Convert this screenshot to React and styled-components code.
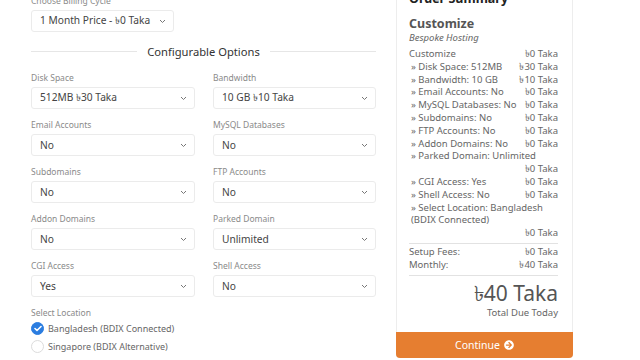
import React from "react";
import styled, { createGlobalStyle } from "styled-components";
import { FaArrowCircleRight } from "react-icons/fa";

const GlobalStyle = createGlobalStyle`
  html, body { margin: 0; padding: 0; background: #fff; overflow: hidden; }
  body { font-family: "Noto Sans", "DejaVu Sans", sans-serif; color: #444; }
  * { box-sizing: border-box; }
`;

const Page = styled.div`
  display: flex;
  align-items: flex-start;
  gap: 20px;
  padding-left: 31px;
  width: 640px;
  height: 360px;
  overflow: hidden;
`;

const Main = styled.div`
  width: 345px;
  margin-top: -5px;
  display: flex;
  flex-direction: column;
`;

const Field = styled.div`
  display: flex;
  flex-direction: column;
  gap: 4px;
  width: ${(p) => p.$width || "100%"};
`;

const Label = styled.div`
  font-size: 8.5px;
  line-height: 11px;
  color: #8a8a8a;
  white-space: nowrap;
`;

const SelectBox = styled.div`
  height: 22px;
  border: 1px solid #ebebeb;
  border-radius: 3px;
  background: #fff;
  display: flex;
  align-items: center;
  justify-content: space-between;
  padding: 0 7px 0 8px;
  font-size: 10.2px;
  color: #444;
  white-space: nowrap;
`;

const Divider = styled.div`
  display: flex;
  align-items: center;
  gap: 10px;
  margin: 13px 0 15px;
  height: 12px;
  &::before, &::after {
    content: "";
    flex: 1;
    height: 1px;
    background: #e6e6e6;
  }
`;

const DividerText = styled.span`
  font-size: 11.2px;
  color: #333;
  white-space: nowrap;
`;

const Grid = styled.div`
  display: grid;
  grid-template-columns: 164px 163px;
  column-gap: 18px;
  row-gap: 10px;
`;

const RadioList = styled.div`
  display: flex;
  flex-direction: column;
  gap: 5px;
  margin-top: 0;
`;

const RadioRow = styled.div`
  display: flex;
  align-items: center;
  gap: 4px;
  font-size: 9px;
  color: #666;
  height: 13px;
`;

const RadioDot = styled.span`
  width: 13px;
  height: 13px;
  border-radius: 50%;
  background: ${(p) => (p.$checked ? "#2b7de0" : "#fff")};
  border: 1px solid ${(p) => (p.$checked ? "#2b7de0" : "#dcdcdc")};
  display: flex;
  align-items: center;
  justify-content: center;
  flex-shrink: 0;
`;

const Summary = styled.div`
  width: 177px;
  margin-top: -10px;
  border: 1px solid #ededed;
  border-bottom: none;
  border-radius: 4px;
  display: flex;
  flex-direction: column;
`;

const SummaryBody = styled.div`
  padding: 0 14px 0 12px;
  display: flex;
  flex-direction: column;
`;

const SummaryTitle = styled.div`
  font-size: 12.5px;
  font-weight: 700;
  line-height: 16px;
  color: #222;
`;

const ProductName = styled.div`
  margin-top: 9px;
  font-size: 12.5px;
  font-weight: 700;
  line-height: 15px;
  color: #555;
`;

const ProductGroup = styled.div`
  font-size: 9.5px;
  font-style: italic;
  line-height: 13px;
  color: #666;
  margin-bottom: 4px;
`;

const Line = styled.div`
  display: flex;
  flex-wrap: wrap;
  justify-content: space-between;
  font-size: 9.5px;
  line-height: 12.8px;
  color: #666;
`;

const LineName = styled.span`
  padding-left: ${(p) => (p.$sub ? "2px" : "0")};
  width: ${(p) => (p.$full ? "100%" : "auto")};
  white-space: ${(p) => (p.$full ? "normal" : "nowrap")};
`;

const LinePrice = styled.span`
  margin-left: auto;
  white-space: nowrap;
`;

const Sep = styled.div`
  height: 1px;
  background: #e2e2e2;
  margin: ${(p) => p.$m || "3px 0"};
`;

const Total = styled.div`
  text-align: right;
  font-size: 21px;
  line-height: 26px;
  color: #555;
  margin-top: 4px;
`;

const TotalCaption = styled.div`
  text-align: right;
  font-size: 9.5px;
  line-height: 13px;
  color: #666;
`;

const ContinueButton = styled.button`
  margin: 13px -1px 0;
  height: 26px;
  border: none;
  border-radius: 0 0 4px 4px;
  background: #e67e30;
  color: #fff;
  font-family: inherit;
  font-size: 10.5px;
  display: flex;
  align-items: center;
  justify-content: center;
  gap: 4px;
  cursor: pointer;
`;

const Chevron = () => (
  <svg width="7" height="5" viewBox="0 0 7 5">
    <path d="M1 1l2.5 2.5L6 1" fill="none" stroke="#777" strokeWidth="1" />
  </svg>
);

const Check = () => (
  <svg width="8" height="7" viewBox="0 0 8 7">
    <path d="M1 3.5l2 2L7 1.5" fill="none" stroke="#fff" strokeWidth="1.6" strokeLinecap="round" strokeLinejoin="round" />
  </svg>
);

const Select = ({ value }) => (
  <SelectBox>
    <span>{value}</span>
    <Chevron />
  </SelectBox>
);

const options = [
  ["Disk Space", "512MB ৳30 Taka"],
  ["Bandwidth", "10 GB ৳10 Taka"],
  ["Email Accounts", "No"],
  ["MySQL Databases", "No"],
  ["Subdomains", "No"],
  ["FTP Accounts", "No"],
  ["Addon Domains", "No"],
  ["Parked Domain", "Unlimited"],
  ["CGI Access", "Yes"],
  ["Shell Access", "No"],
];

const lines = [
  { name: "» Disk Space: 512MB", price: "৳30 Taka" },
  { name: "» Bandwidth: 10 GB", price: "৳10 Taka" },
  { name: "» Email Accounts: No", price: "৳0 Taka" },
  { name: "» MySQL Databases: No", price: "৳0 Taka" },
  { name: "» Subdomains: No", price: "৳0 Taka" },
  { name: "» FTP Accounts: No", price: "৳0 Taka" },
  { name: "» Addon Domains: No", price: "৳0 Taka" },
  { name: "» Parked Domain: Unlimited", price: "৳0 Taka", full: true },
  { name: "» CGI Access: Yes", price: "৳0 Taka" },
  { name: "» Shell Access: No", price: "৳0 Taka" },
];

export default function App() {
  return (
    <>
      <GlobalStyle />
      <Page>
        <Main>
          <Field $width="143px">
            <Label>Choose Billing Cycle</Label>
            <Select value="1 Month Price - ৳0 Taka" />
          </Field>
          <Divider>
            <DividerText>Configurable Options</DividerText>
          </Divider>
          <Grid>
            {options.map(([label, value]) => (
              <Field key={label}>
                <Label>{label}</Label>
                <Select value={value} />
              </Field>
            ))}
            <Field>
              <Label>Select Location</Label>
              <RadioList>
                <RadioRow>
                  <RadioDot $checked>
                    <Check />
                  </RadioDot>
                  Bangladesh (BDIX Connected)
                </RadioRow>
                <RadioRow>
                  <RadioDot />
                  Singapore (BDIX Alternative)
                </RadioRow>
              </RadioList>
            </Field>
          </Grid>
        </Main>
        <Summary>
          <SummaryBody>
            <SummaryTitle>Order Summary</SummaryTitle>
            <ProductName>Customize</ProductName>
            <ProductGroup>Bespoke Hosting</ProductGroup>
            <Line>
              <LineName>Customize</LineName>
              <LinePrice>৳0 Taka</LinePrice>
            </Line>
            {lines.map((l) => (
              <Line key={l.name}>
                <LineName $sub $full={l.full}>{l.name}</LineName>
                <LinePrice>{l.price}</LinePrice>
              </Line>
            ))}
            <Line>
              <LineName $sub $full>
                » Select Location: Bangladesh
                <br />
                (BDIX Connected)
              </LineName>
              <LinePrice>৳0 Taka</LinePrice>
            </Line>
            <Sep $m="3px 0 2px" />
            <Line>
              <LineName>Setup Fees:</LineName>
              <LinePrice>৳0 Taka</LinePrice>
            </Line>
            <Line>
              <LineName>Monthly:</LineName>
              <LinePrice>৳40 Taka</LinePrice>
            </Line>
            <Sep $m="3px 0 0" />
            <Total>৳40 Taka</Total>
            <TotalCaption>Total Due Today</TotalCaption>
          </SummaryBody>
          <ContinueButton>
            Continue <FaArrowCircleRight size={10} />
          </ContinueButton>
        </Summary>
      </Page>
    </>
  );
}
